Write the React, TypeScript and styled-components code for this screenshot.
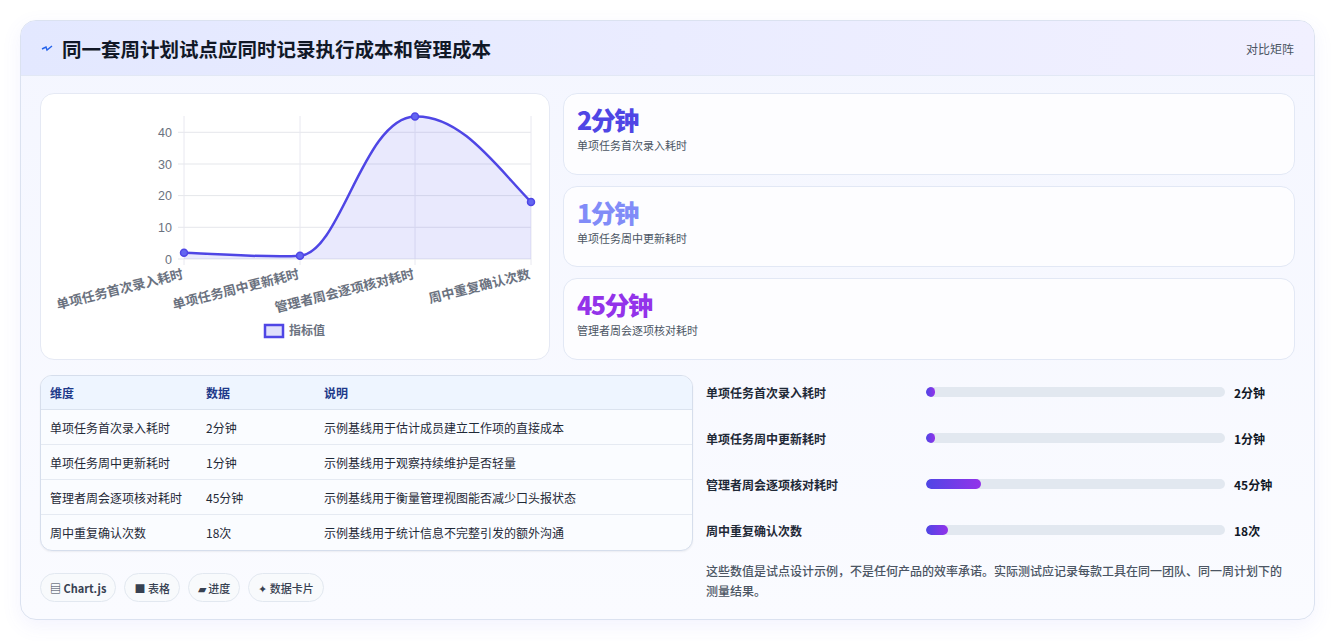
import React from "react";
import styled, { createGlobalStyle } from "styled-components";

const Global = createGlobalStyle`
  * { box-sizing: border-box; }
  body { margin: 0; background: #fff; font-family: "Noto Sans CJK SC", "Noto Sans", sans-serif; }
`;

const Page = styled.div`
  padding: 20px 21px 21px 20px;
`;
const Card = styled.div`
  border: 1px solid #dbe2f0;
  border-radius: 16px;
  overflow: hidden;
  background: linear-gradient(180deg, #f4f6ff 0%, #fafbff 100%);
  box-shadow: 0 6px 20px rgba(99, 102, 241, 0.08);
`;
const Header = styled.div`
  height: 55px;
  display: flex;
  align-items: center;
  justify-content: space-between;
  padding: 0 20px;
  background: linear-gradient(90deg, #e3e8ff 0%, #f1f0ff 100%);
  border-bottom: 1px solid #e2e8f5;
`;
const Title = styled.h1`
  margin: 0;
  display: flex;
  align-items: center;
  gap: 9px;
  font-size: 19.5px;
  font-weight: 700;
  color: #111827;
`;
const HeaderTag = styled.span`
  font-size: 12px;
  color: #4b5563;
`;
const Body = styled.div`
  padding: 17px 19px 17px 19px;
  display: flex;
  flex-direction: column;
  gap: 15px;
`;
const TopRow = styled.div`
  display: grid;
  grid-template-columns: 510px 1fr;
  gap: 13px;
  height: 267px;
`;
const ChartBox = styled.div`
  position: relative;
  background: #fff;
  border: 1px solid #e5e9f4;
  border-radius: 14px;
`;
const Metrics = styled.div`
  display: grid;
  grid-template-rows: repeat(3, 1fr);
  gap: 11px;
`;
const Metric = styled.div`
  background: #fdfdff;
  border: 1px solid #e2e8f5;
  border-radius: 14px;
  padding: 8px 13px;
`;
const MetricValue = styled.div<{ $c: string }>`
  font-size: 25px;
  font-weight: 800;
  line-height: 34px;
  letter-spacing: -1.5px;
  color: ${(p) => p.$c};
`;
const MetricLabel = styled.div`
  font-size: 11px;
  color: #4b5563;
  margin-top: 1px;
`;
const BottomRow = styled.div`
  display: grid;
  grid-template-columns: 653px 1fr;
  gap: 13px;
`;
const LeftCol = styled.div`
  display: flex;
  flex-direction: column;
  gap: 22px;
`;
const Table = styled.table`
  width: 100%;
  border-collapse: separate;
  border-spacing: 0;
  border: 1px solid #d6deec;
  border-radius: 12px;
  overflow: hidden;
  font-size: 12px;
  background: #fafcff;
  box-shadow: 0 1px 2px rgba(15, 23, 42, 0.06);
`;
const Th = styled.th<{ $w?: number }>`
  text-align: left;
  font-weight: 700;
  color: #1e3a8a;
  background: #eef5ff;
  height: 34px;
  padding: 0 9px;
  border-bottom: 1px solid #dbe3ef;
  width: ${(p) => (p.$w ? p.$w + "px" : "auto")};
`;
const Td = styled.td<{ $last?: boolean }>`
  height: 35px;
  padding: 0 9px;
  color: #1f2937;
  border-bottom: ${(p) => (p.$last ? "none" : "1px solid #e5eaf2")};
`;
const Chips = styled.div`
  display: flex;
  gap: 8px;
`;
const Chip = styled.span`
  height: 29px;
  padding: 0 9px;
  display: inline-flex;
  align-items: center;
  gap: 3px;
  border: 1px solid #e2e8f0;
  border-radius: 15px;
  background: #f8fafc;
  font-size: 11px;
  color: #374151;
  font-weight: 500;
`;
const RightCol = styled.div`
  display: flex;
  flex-direction: column;
  margin-top: -6px;
`;
const BarRow = styled.div`
  display: grid;
  grid-template-columns: 220px 308px 1fr;
  align-items: center;
  height: 46px;
  font-size: 12px;
  color: #1f2937;
  font-weight: 600;
`;
const Track = styled.div`
  height: 10px;
  border-radius: 5px;
  background: #e2e8f0;
  margin-right: 9px;
  overflow: hidden;
`;
const Fill = styled.div`
  height: 100%;
  border-radius: 5px;
  background: linear-gradient(90deg, #4f46e5, #9333ea);
`;
const Value = styled.span`
  font-weight: 700;
  color: #111827;
`;
const Note = styled.p`
  margin: 8px 0 0;
  max-width: 580px;
  font-size: 12px;
  line-height: 20px;
  color: #4b5563;
  font-weight: 500;
`;

const rows = [
  ["单项任务首次录入耗时", "2分钟", "示例基线用于估计成员建立工作项的直接成本", 3],
  ["单项任务周中更新耗时", "1分钟", "示例基线用于观察持续维护是否轻量", 3],
  ["管理者周会逐项核对耗时", "45分钟", "示例基线用于衡量管理视图能否减少口头报状态", 18.5],
  ["周中重复确认次数", "18次", "示例基线用于统计信息不完整引发的额外沟通", 7.5],
] as const;

const xs = [143, 259, 374, 490];
const gridY = [165, 133.3, 101.6, 70, 38.3];

function Chart() {
  const line = "M143,158.7 C185,160 225,164 259,161.8 C300,159 322,24 374,22.5 C420,21 455,72 490,108";
  return (
    <svg width="510" height="267" style={{ position: "absolute", left: 0, top: 0 }}>
      {gridY.map((y, i) => (
        <g key={y}>
          <line x1={137} x2={490} y1={y} y2={y} stroke="#e5e7eb" />
          <text x={131} y={y + 4.5} textAnchor="end" fontSize="12.5" fill="#6b7280" fontFamily="Liberation Sans, sans-serif">
            {i * 10}
          </text>
        </g>
      ))}
      {xs.map((x) => (
        <line key={x} x1={x} x2={x} y1={22} y2={171} stroke="#e8e8f0" />
      ))}
      <path d={line + " L490,165 L143,165 Z"} fill="rgba(99,102,241,0.14)" />
      <path d={line} fill="none" stroke="#4f46e5" strokeWidth="2.5" />
      {[[143, 158.7], [259, 161.8], [374, 22.5], [490, 108]].map(([x, y]) => (
        <circle key={x} cx={x} cy={y} r="3.5" fill="#6366f1" stroke="#4f46e5" strokeWidth="1.5" />
      ))}
      {["单项任务首次录入耗时", "单项任务周中更新耗时", "管理者周会逐项核对耗时", "周中重复确认次数"].map((t, i) => (
        <text
          key={t}
          x={xs[i]}
          y={184}
          textAnchor="end"
          fontSize="13"
          fontWeight="700"
          fill="#6b7280"
          transform={`rotate(-14 ${xs[i]} 184)`}
        >
          {t}
        </text>
      ))}
      <rect x={224} y={231} width={18} height={12} fill="#e0e0fb" stroke="#4f46e5" strokeWidth="2.5" />
      <text x={248} y={241} fontSize="12" fill="#6b7280" fontWeight="600">指标值</text>
    </svg>
  );
}

export default function App() {
  return (
    <Page>
      <Global />
      <Card>
        <Header>
          <Title>
            <svg width="12" height="10" viewBox="0 0 12 10">
              <path d="M1 6 L5 4 L6 7 L11 3" fill="none" stroke="#2563eb" strokeWidth="1.4" />
            </svg>
            同一套周计划试点应同时记录执行成本和管理成本
          </Title>
          <HeaderTag>对比矩阵</HeaderTag>
        </Header>
        <Body>
          <TopRow>
            <ChartBox>
              <Chart />
            </ChartBox>
            <Metrics>
              <Metric>
                <MetricValue $c="#4f46e5">2分钟</MetricValue>
                <MetricLabel>单项任务首次录入耗时</MetricLabel>
              </Metric>
              <Metric>
                <MetricValue $c="#818cf8">1分钟</MetricValue>
                <MetricLabel>单项任务周中更新耗时</MetricLabel>
              </Metric>
              <Metric>
                <MetricValue $c="#9333ea">45分钟</MetricValue>
                <MetricLabel>管理者周会逐项核对耗时</MetricLabel>
              </Metric>
            </Metrics>
          </TopRow>
          <BottomRow>
            <LeftCol>
              <Table>
                <thead>
                  <tr>
                    <Th $w={156}>维度</Th>
                    <Th $w={118}>数据</Th>
                    <Th>说明</Th>
                  </tr>
                </thead>
                <tbody>
                  {rows.map((r, i) => (
                    <tr key={r[0]}>
                      <Td $last={i === 3}>{r[0]}</Td>
                      <Td $last={i === 3}>{r[1]}</Td>
                      <Td $last={i === 3}>{r[2]}</Td>
                    </tr>
                  ))}
                </tbody>
              </Table>
              <Chips>
                <Chip><b>▤ Chart.js</b></Chip>
                <Chip>■ 表格</Chip>
                <Chip>▰ 进度</Chip>
                <Chip>✦ 数据卡片</Chip>
              </Chips>
            </LeftCol>
            <RightCol>
              {rows.map((r) => (
                <BarRow key={r[0]}>
                  <span>{r[0]}</span>
                  <Track>
                    <Fill style={{ width: r[3] + "%" }} />
                  </Track>
                  <Value>{r[1]}</Value>
                </BarRow>
              ))}
              <Note>这些数值是试点设计示例，不是任何产品的效率承诺。实际测试应记录每款工具在同一团队、同一周计划下的测量结果。</Note>
            </RightCol>
          </BottomRow>
        </Body>
      </Card>
    </Page>
  );
}
